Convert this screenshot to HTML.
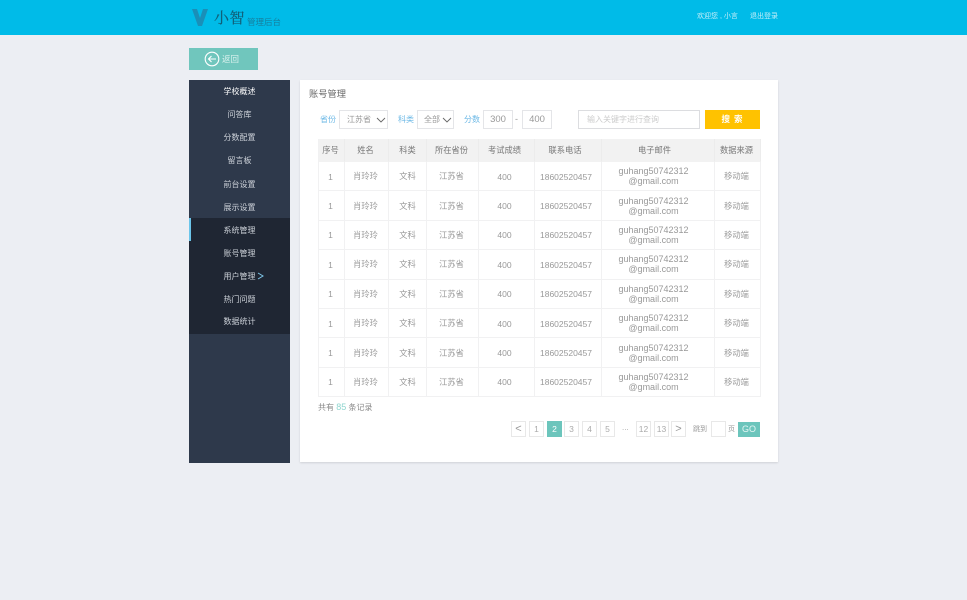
<!DOCTYPE html>
<html lang="zh"><head><meta charset="utf-8"><title>账号管理</title>
<style>
*{box-sizing:border-box}
html,body{margin:0;padding:0}
html{background:#eceef3}
body{width:967px;height:600px;overflow:hidden;background:#eceef3;position:relative;font-family:"Liberation Sans","Noto Sans CJK SC",sans-serif;font-size:8px;color:#888;filter:blur(.3px)}
.a{position:absolute;white-space:nowrap}
.top{left:0;top:0;width:967px;height:35px;background:#00bbe8}
.side{left:189px;top:80px;width:101px;height:383px;background:#2e394b}
.dark{left:189px;top:218px;width:101px;height:116px;background:#1f2633}
.bar{left:189px;top:218px;width:2px;height:23px;background:#6cc5ea}
.m{left:189px;width:101px;text-align:center;color:#ccd1d8;font-size:8px;line-height:14px}
.card{left:300px;top:80px;width:478px;height:382px;background:#fff;box-shadow:0 1px 2px rgba(0,0,0,.12)}
.box{background:#fff;border:1px solid #e4e5e8;text-align:center;color:#999}
.lbl{color:#6db9e6;font-size:8px;line-height:14px}
table{position:absolute;left:318px;top:139px;width:443px;border-collapse:separate;border-spacing:0;table-layout:fixed;font-size:8.25px;color:#999;border-top:0;border-left:1px solid #f1f1f2}
td,th{border-right:1px solid #f1f1f2;border-bottom:1px solid #f1f1f2;text-align:center;padding:2px 0 0;font-weight:normal;line-height:10px}
th{background:#f2f2f2;color:#777;height:23px;border-color:#f2f2f2;border-right-color:#ececec;padding-top:1px}
th:nth-child(1),td:nth-child(1),th:nth-child(2),td:nth-child(2),th:nth-child(4),td:nth-child(4),th:nth-child(8),td:nth-child(8){padding-right:2px}
th:nth-child(5),td:nth-child(5){padding-right:4px}
th:nth-child(6){padding-right:6px}
td:nth-child(6){padding-right:4px}
th:nth-child(7){padding-right:7px}
tr.r td{height:29.4px}
tr.r td.n{font-size:8.5px;padding-top:1px}
tr.r td.e{font-size:9px;color:#999;padding:0 9px 0 0}
.p{top:421px;height:16px;line-height:14px;background:#fff;border:1px solid #e8e8e8;text-align:center;color:#aaa;font-size:8.5px}
</style></head><body>
<div class="a top"></div>
<svg class="a" style="left:192px;top:9px" width="16" height="17" viewBox="0 0 16 17"><path d="M0 0H5L8 9L11 0H16L10 17H6Z" fill="#1a8fb8"/></svg>
<div class="a" style="left:214px;top:9px;font-family:'Liberation Serif','Noto Serif CJK SC',serif;font-size:15px;line-height:20px;color:#125f78;letter-spacing:.5px;-webkit-text-stroke:.2px #125f78">小智</div>
<div class="a" style="left:247px;top:16px;font-size:8.5px;line-height:13px;color:#167f9e">管理后台</div>
<div class="a" style="left:697px;top:11px;font-size:7px;line-height:12px;color:#c4eef9">欢迎您 , 小言</div>
<div class="a" style="left:750px;top:11px;font-size:7px;line-height:12px;color:#c4eef9">退出登录</div>

<div class="a" style="left:189px;top:48px;width:69px;height:22px;background:#70c6bd"></div>
<svg class="a" style="left:204px;top:51px" width="16" height="16" viewBox="0 0 16 16" fill="none" stroke="#fff" stroke-width="1.1"><circle cx="8" cy="8" r="6.8"/><path d="M12 8H4.5M7.5 5L4.5 8L7.5 11"/></svg>
<div class="a" style="left:222px;top:52px;font-size:8.5px;line-height:14px;color:#d8f0ed">返回</div>

<div class="a side"></div>
<div class="a dark"></div>
<div class="a bar"></div>
<div class="a m" style="top:85px;color:#fff">学校概述</div>
<div class="a m" style="top:108px">问答库</div>
<div class="a m" style="top:131px">分数配置</div>
<div class="a m" style="top:154px">留言板</div>
<div class="a m" style="top:178px">前台设置</div>
<div class="a m" style="top:201px">展示设置</div>
<div class="a m" style="top:224px">系统管理</div>
<div class="a m" style="top:247px">账号管理</div>
<div class="a m" style="top:270px">用户管理</div>
<svg class="a" style="left:257px;top:272px" width="7" height="8" viewBox="0 0 7 8" fill="none" stroke="#7fc8ea" stroke-width="1"><path d="M1 1L6 4L1 7"/></svg>
<div class="a m" style="top:293px">热门问题</div>
<div class="a m" style="top:315px">数据统计</div>

<div class="a card"></div>
<div class="a" style="left:309px;top:87px;font-size:9.25px;line-height:14px;color:#666">账号管理</div>

<div class="a lbl" style="left:320px;top:113px">省份</div>
<div class="a box" style="left:339px;top:110px;width:49px;height:19px;line-height:17px;text-align:left;padding-left:7px">江苏省</div>
<svg class="a" style="left:376px;top:117px" width="10" height="6" viewBox="0 0 10 6" fill="none" stroke="#666" stroke-width=".9"><path d="M1 1L5 5L9 1"/></svg>
<div class="a lbl" style="left:398px;top:113px">科类</div>
<div class="a box" style="left:417px;top:110px;width:37px;height:19px;line-height:17px;text-align:left;padding-left:6px">全部</div>
<svg class="a" style="left:442px;top:117px" width="10" height="6" viewBox="0 0 10 6" fill="none" stroke="#666" stroke-width=".9"><path d="M1 1L5 5L9 1"/></svg>
<div class="a lbl" style="left:464px;top:113px">分数</div>
<div class="a box" style="left:483px;top:110px;width:30px;height:19px;line-height:18px;font-size:9.5px">300</div>
<div class="a" style="left:515px;top:112px;line-height:14px;color:#999;font-size:9px">-</div>
<div class="a box" style="left:522px;top:110px;width:30px;height:19px;line-height:18px;font-size:9.5px">400</div>
<div class="a box" style="left:578px;top:110px;width:122px;height:19px;line-height:17px;text-align:left;padding-left:8px;color:#ccc;border-color:#dcdde0">输入关键字进行查询</div>
<div class="a" style="left:705px;top:110px;width:55px;height:19px;background:#ffc200;color:#fff;text-align:center;line-height:19px;font-weight:bold;font-size:8.5px;letter-spacing:4px;padding-left:3px">搜索</div>

<table>
<colgroup><col style="width:26px"><col style="width:44px"><col style="width:38px"><col style="width:52px"><col style="width:56px"><col style="width:67px"><col style="width:113px"><col style="width:46px"></colgroup>
<tr><th>序号</th><th>姓名</th><th>科类</th><th>所在省份</th><th>考试成绩</th><th>联系电话</th><th>电子邮件</th><th>数据来源</th></tr>
<tr class="r"><td class="n">1</td><td>肖玲玲</td><td>文科</td><td>江苏省</td><td class="n">400</td><td class="n">18602520457</td><td class="e">guhang50742312<br>@gmail.com</td><td>移动端</td></tr>
<tr class="r"><td class="n">1</td><td>肖玲玲</td><td>文科</td><td>江苏省</td><td class="n">400</td><td class="n">18602520457</td><td class="e">guhang50742312<br>@gmail.com</td><td>移动端</td></tr>
<tr class="r"><td class="n">1</td><td>肖玲玲</td><td>文科</td><td>江苏省</td><td class="n">400</td><td class="n">18602520457</td><td class="e">guhang50742312<br>@gmail.com</td><td>移动端</td></tr>
<tr class="r"><td class="n">1</td><td>肖玲玲</td><td>文科</td><td>江苏省</td><td class="n">400</td><td class="n">18602520457</td><td class="e">guhang50742312<br>@gmail.com</td><td>移动端</td></tr>
<tr class="r"><td class="n">1</td><td>肖玲玲</td><td>文科</td><td>江苏省</td><td class="n">400</td><td class="n">18602520457</td><td class="e">guhang50742312<br>@gmail.com</td><td>移动端</td></tr>
<tr class="r"><td class="n">1</td><td>肖玲玲</td><td>文科</td><td>江苏省</td><td class="n">400</td><td class="n">18602520457</td><td class="e">guhang50742312<br>@gmail.com</td><td>移动端</td></tr>
<tr class="r"><td class="n">1</td><td>肖玲玲</td><td>文科</td><td>江苏省</td><td class="n">400</td><td class="n">18602520457</td><td class="e">guhang50742312<br>@gmail.com</td><td>移动端</td></tr>
<tr class="r"><td class="n">1</td><td>肖玲玲</td><td>文科</td><td>江苏省</td><td class="n">400</td><td class="n">18602520457</td><td class="e">guhang50742312<br>@gmail.com</td><td>移动端</td></tr>
</table>

<div class="a" style="left:318px;top:400px;line-height:14px;color:#888">共有 <span style="color:#8fd6cf;font-size:9px">85</span> 条记录</div>

<div class="a p" style="left:511px;width:15px;font-size:11px;color:#999">&lt;</div>
<div class="a p" style="left:529px;width:15px">1</div>
<div class="a p" style="left:547px;width:15px;background:#6cc5bc;border-color:#6cc5bc;color:#fff">2</div>
<div class="a p" style="left:564px;width:15px">3</div>
<div class="a p" style="left:582px;width:15px">4</div>
<div class="a p" style="left:600px;width:15px">5</div>
<div class="a" style="left:622px;top:421px;line-height:14px;color:#aaa">...</div>
<div class="a p" style="left:636px;width:15px">12</div>
<div class="a p" style="left:654px;width:15px">13</div>
<div class="a p" style="left:671px;width:15px;font-size:11px;color:#999">&gt;</div>
<div class="a" style="left:693px;top:423px;font-size:7px;line-height:14px;color:#999">跳到</div>
<div class="a p" style="left:711px;width:15px"></div>
<div class="a" style="left:728px;top:423px;font-size:7px;line-height:14px;color:#999">页</div>
<div class="a" style="left:738px;top:422px;width:22px;height:15px;background:#6cc5bc;color:#e6f6f4;text-align:center;line-height:15px;font-size:9px">GO</div>
</body></html>
